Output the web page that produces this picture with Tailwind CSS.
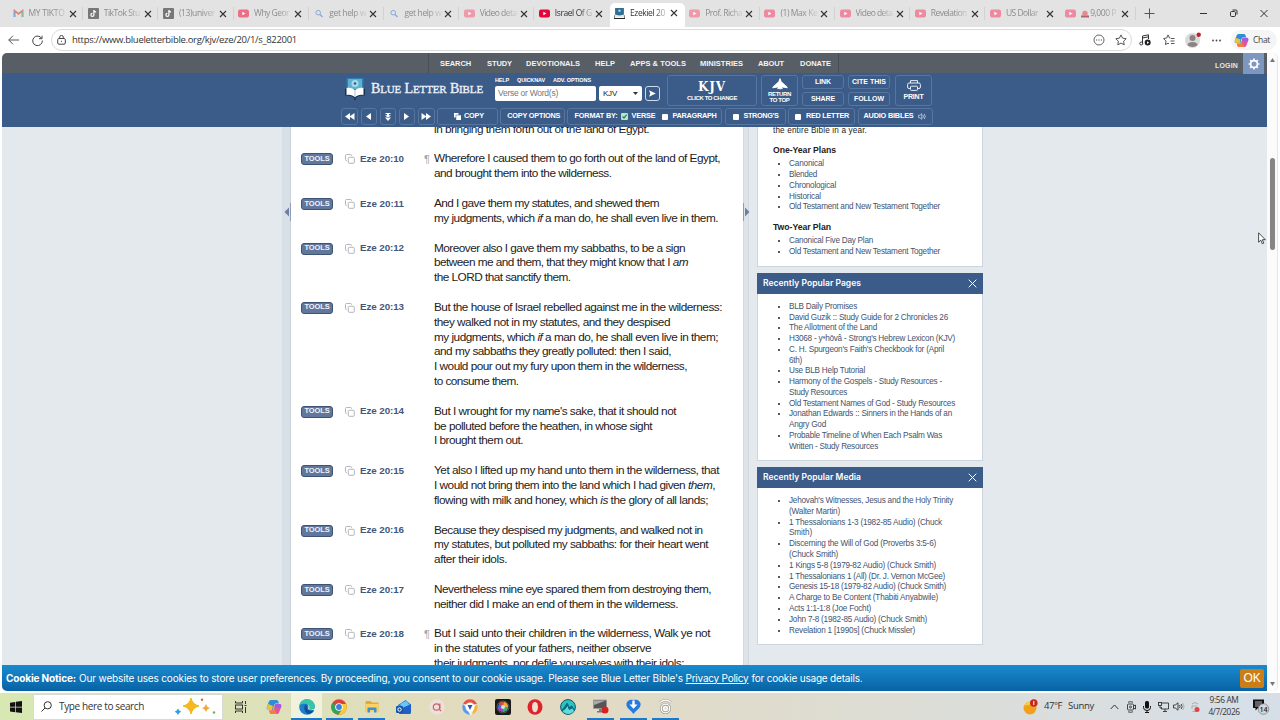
<!DOCTYPE html>
<html lang="en">
<head>
<meta charset="utf-8">
<title>Ezekiel 20 (KJV) - Blue Letter Bible</title>
<script src="https://cdn.jsdelivr.net/npm/@tailwindcss/browser@4"></script>
</head>
<body class="w-[1280px] h-[720px] overflow-hidden bg-white font-['Liberation_Sans',sans-serif]">
<svg class="hidden">
  <symbol id="yt" viewBox="0 0 11 9"><rect y="0.5" width="11" height="8" rx="2" fill="currentColor"/><path d="M4.3 2.7v3.6L7.4 4.5z" fill="#fff"/></symbol>
  <symbol id="x" viewBox="0 0 8 8"><path d="M1 1l6 6M7 1L1 7" stroke="currentColor" stroke-width="1.1" fill="none"/></symbol>
  <symbol id="gm" viewBox="0 0 11 9"><path d="M1.500 8V1.700L5.500 5l4-3.300V8" fill="none" stroke="#e08078" stroke-width="1.700"/><path d="M1.500 8V2.500" stroke="#86a9e0" stroke-width="1.700"/><path d="M9.500 8V2.500" stroke="#86c090" stroke-width="1.700"/></symbol>
  <symbol id="tk" viewBox="0 0 11 11"><rect width="11" height="11" rx="1" fill="#777"/><path d="M5.9 2v4.9a1.5 1.5 0 1 1-1.5-1.5M5.9 2.2c.2 1.300 1 1.900 2.200 2" stroke="#fff" stroke-width="1.2" fill="none"/></symbol>
  <symbol id="mag" viewBox="0 0 11 9"><circle cx="5.200" cy="3.700" r="2.300" stroke="#86a9d8" fill="none"/><path d="M7 5.500L9.500 8" stroke="#86a9d8" stroke-width="1.200"/></symbol>
  <symbol id="blb" viewBox="0 0 10 10"><rect x="1" width="8" height="7" fill="#2f6f94"/><circle cx="5" cy="2.500" r="1.200" fill="#9fd0e0"/><path d="M1 6l4 1 4-1v2.500H1z" fill="#dfe9ee"/><path d="M0 6.500V9.500h10v-3" stroke="#222" fill="none"/></symbol>
  <symbol id="cp" viewBox="0 0 10 10"><rect x="3.300" y="3.300" width="6" height="6" rx="1" stroke="#a9aeb5" fill="none" stroke-width=".9"/><path d="M2 6.500H1.500a1 1 0 0 1-1-1v-4a1 1 0 0 1 1-1h4a1 1 0 0 1 1 1V2" stroke="#a9aeb5" fill="none" stroke-width=".9"/></symbol>
  <symbol id="copilot" viewBox="0 0 16 16">
    <path d="M5.500 1h5c1.200 0 1.600 1 2 2l.4 1.500H10c-1 0-1.500.7-1.800 1.600L6.800 11H2.500C.8 11 .4 9.500.9 8L2.700 3C3.200 1.600 4 1 5.500 1z" fill="#2a8fd8"/>
    <path d="M1 8l1-3 5 2-1 4H2.500C1 11 .6 9.500 1 8z" fill="#e8c23a"/>
    <path d="M10.500 15h-5c-1.200 0-1.600-1-2-2L3.100 11.500H6c1 0 1.500-.7 1.800-1.600L9.200 5h4.300c1.700 0 2.100 1.500 1.600 3l-1.800 5c-.5 1.400-1.300 2-2.800 2z" fill="#e0569a"/>
    <path d="M9.200 5h4.300c1.700 0 2.100 1.500 1.600 3l-.6 1.600-6-1.800z" fill="#a45be0"/><path d="M3.100 11.500H6c1 0 1.500-.7 1.800-1.600l.2-.6 3 5.700H5.500c-1.400 0-2-2-2.400-3.500z" fill="#f08040"/>
  </symbol>
</svg>

<!-- tab strip -->
<div class="flex h-[27px] bg-[#e3e3e3] pl-[8px] font-['Open_Sans',sans-serif] text-[8.500px] text-[#8c8c8c]">
  <div id="tabs" class="flex w-[1127.500px] shrink-0"></div>
  <svg class="mt-[8px] ml-[8px] size-[11px] shrink-0" viewBox="0 0 11 11"><path d="M5.500.5v10M.5 5.500h10" stroke="#555"/></svg>
  <svg class="mt-[9px] ml-[44px] h-[9px] w-[72px] shrink-0" viewBox="0 0 72 9" fill="none" stroke="#333"><path d="M1 4.500h7M61.500 1l7 7M68.500 1l-7 7"/><rect x="31.500" y="2.500" width="5" height="5" rx="1.200"/><path d="M33.500 1H37a1 1 0 0 1 1 1v3.500"/></svg>
</div>

<!-- address bar -->
<div class="flex h-[26px] items-center bg-white">
  <svg class="ml-[8px] h-[10px] w-[11px] shrink-0" viewBox="0 0 11 10" fill="none" stroke="#555"><path d="M11 5H.8M5 .7L.8 5 5 9.300"/></svg>
  <svg class="ml-[13px] size-[11px] shrink-0" viewBox="0 0 11 11" fill="none" stroke="#444"><path d="M9.700 3.500A4.800 4.800 0 1 0 10.300 5.500M10 .7v3H7"/></svg>
  <div class="ml-[8px] flex h-[22px] w-[1081px] shrink-0 items-center rounded-full border border-[#d9dcdc] pr-[4px] pl-[5px]">
    <svg class="h-[10px] w-[9px] shrink-0" viewBox="0 0 9 10" fill="none" stroke="#444"><rect x=".7" y="3.500" width="7.600" height="5.700" rx="1.200"/><path d="M2.700 3.500V2.200a1.800 1.800 0 0 1 3.600 0v1.300"/><path d="M4 6.300h1"/></svg>
    <span class="ml-[6px] whitespace-nowrap font-['Open_Sans',sans-serif] text-[9.500px] text-[#333]" data-w="225">https://www.blueletterbible.org/kjv/eze/20/1/s_822001</span>
    <svg class="ml-auto size-[12px] shrink-0" viewBox="0 0 12 12" fill="none" stroke="#555" stroke-width=".9"><circle cx="6" cy="6" r="5"/><path d="M3 6h1.200M5.400 6h1.200M7.800 6H9" stroke-width="1.200"/></svg>
    <svg class="ml-[10px] size-[12px] shrink-0" viewBox="0 0 12 12" fill="none" stroke="#444" stroke-width=".9"><path d="M6 .9l1.600 3.300 3.600.5-2.600 2.500.6 3.600L6 9.100l-3.200 1.700.6-3.600L.8 4.700l3.600-.5z"/></svg>
  </div>
  <svg class="ml-[7px] size-[12px] shrink-0" viewBox="0 0 12 12"><path d="M3.500 9.500V2l6-1.200V5M3.500 4l6-1.200" fill="none" stroke="#333"/><circle cx="2.300" cy="9.500" r="1.500" fill="none" stroke="#333"/><circle cx="8.700" cy="8.600" r="3" fill="#222"/><path d="M8 7.200v2.800l2.200-1.400z" fill="#fff"/></svg>
  <svg class="ml-[12px] h-[12px] w-[12px] shrink-0" viewBox="0 0 12 12" fill="none" stroke="#444" stroke-width=".9"><path d="M7.500 4.200L6.500 4 5 .9 3.700 4l-3.200.6L3 7.100l-.6 3.500L5 9.200l1 .5M8 4.500h3.500M7.500 7h4M8 9.500h3.500"/></svg>
  <svg class="ml-[10px] h-[16px] w-[17px] shrink-0" viewBox="0 0 17 16"><circle cx="7.500" cy="8.500" r="7.500" fill="#dadada"/><circle cx="7.500" cy="6" r="3" fill="#8a8584"/><path d="M2.500 13c0-4 10-4 10 0-2 2.500-8 2.500-10 0z" fill="#8a8584"/><circle cx="13.700" cy="2.700" r="2.200" fill="#c0202a"/></svg>
  <svg class="ml-[10px] h-[3px] w-[9px] shrink-0" viewBox="0 0 9 3" fill="#444"><circle cx="1" cy="1.500" r=".9"/><circle cx="4.500" cy="1.500" r=".9"/><circle cx="8" cy="1.500" r=".9"/></svg>
  <div class="ml-[10px] flex h-[20px] w-[46px] shrink-0 items-center rounded-full bg-[#f5f5f5] pl-[3px]"><svg class="size-[15px] shrink-0"><use href="#copilot"/></svg><span class="ml-[4px] font-['Open_Sans',sans-serif] text-[8.500px] text-[#444]" data-w="17">Chat</span></div>
</div>

<div class="flex h-[640px] bg-white pl-[2px]">
<!-- page -->
<div class="relative flex h-[638px] w-[1265px] shrink-0 flex-col overflow-hidden rounded-bl-[5px] rounded-tl-[5px] bg-[#e4e9ed]">
  <div class="flex h-[20px] shrink-0 items-center bg-[#575e66] text-[7.500px] font-bold text-[#f3f4f6]">
    <div class="ml-[426px] flex h-full w-[411px] shrink-0 items-center border-x border-[#474e58] pt-px pl-[11px] whitespace-nowrap">
      <span class="w-[47px]"><span data-w="31">SEARCH</span></span><span class="w-[39px]"><span data-w="25">STUDY</span></span><span class="w-[69px]"><span data-w="54">DEVOTIONALS</span></span><span class="w-[35px]"><span data-w="20">HELP</span></span><span class="w-[70px]"><span data-w="56">APPS &amp; TOOLS</span></span><span class="w-[58px]"><span data-w="43">MINISTRIES</span></span><span class="w-[42px]"><span data-w="26">ABOUT</span></span><span data-w="31">DONATE</span>
    </div>
    <span class="mt-[6px] ml-[376px] text-[7px] text-[#e4e7ea]" data-w="23">LOGIN</span>
  </div>
  <div class="absolute top-0 right-[3px] z-10 flex h-[21px] w-[21px] items-center justify-center bg-[#7d97bf]"><svg class="size-[12px]" viewBox="0 0 12 12"><circle cx="6" cy="6" r="3.400" fill="none" stroke="#fff" stroke-width="1.700"/><path d="M6 .6v2M6 9.400v2M.6 6h2M9.400 6h2M2.200 2.200l1.400 1.400M8.400 8.400l1.400 1.400M9.800 2.200L8.400 3.600M3.600 8.400L2.200 9.800" stroke="#fff" stroke-width="1.700"/></svg></div>

  <!-- header -->
  <div class="h-[54px] shrink-0 bg-[#3b5b89] pl-[339px] text-[7px] font-bold whitespace-nowrap text-white">
    <div class="flex h-[35px]">
      <svg class="mt-[4px] ml-[3px] h-[24px] w-[22px] shrink-0" viewBox="0 0 22 24"><rect x="2.500" y="1" width="17" height="16" rx="1" fill="#2e7fae"/><rect x="4" y="2" width="14" height="10" fill="#5db0d2"/><circle cx="11" cy="6.500" r="3.500" fill="#a7d9e6"/><circle cx="11" cy="6.500" r="1.300" fill="#245f88"/><path d="M1 18V12l2-1v6c3-.5 6 0 8 2 2-2 5-2.500 8-2v-6l2 1v6.500c-4 0-7.500.5-10 3-2.500-2.500-6-3-10-3z" fill="#15304f"/><path d="M2.500 11c3.500-.8 6.500.3 8.500 2.500 2-2.200 5-3.300 8.500-2.500v7c-3.500-.6-6.500.2-8.500 2.300-2-2.100-5-2.900-8.500-2.300z" fill="#fff"/><path d="M11 13.500V20" stroke="#9db3c8" stroke-width=".8"/><path d="M9.500 21.500h3L11 23.500z" fill="#15304f"/></svg>
      <div class="mt-[6px] ml-[5px] w-[124px] shrink-0 font-['Liberation_Serif',serif] text-[14px] leading-[19px] font-normal text-[#f0f4f9]"><span class="[-webkit-text-stroke:0.300px_#f0f4f9]" data-w="112">B<span class="text-[11px]">LUE</span> L<span class="text-[11px]">ETTER</span> B<span class="text-[11px]">IBLE</span></span></div>
      <div class="w-[167px] shrink-0 pt-[3px]">
        <div class="flex h-[8px] items-center text-[5.500px]"><span class="w-[22px]"><span data-w="14">HELP</span></span><span class="w-[36px]"><span data-w="28">QUICKNAV</span></span><span data-w="38">ADV. OPTIONS</span></div>
        <div class="mt-[2px] flex h-[15px] gap-[3px] font-normal">
          <div class="flex w-[101px] shrink-0 items-center rounded-[2px] bg-white pl-[3px] text-[8.500px] text-[#777]"><span data-w="60">Verse or Word(s)</span></div>
          <div class="flex w-[43px] shrink-0 items-center rounded-[2px] bg-white pl-[4px] text-[8px] text-[#222]"><span data-w="14">KJV</span><svg class="ml-[16px] h-[3px] w-[5px]" viewBox="0 0 5 3"><path d="M0 0h5L2.500 3z" fill="#333"/></svg></div>
          <div class="flex w-[15px] shrink-0 items-center justify-center rounded-[3px] border border-[#cfdaea]"><svg class="h-[7px] w-[7px]" viewBox="0 0 7 7"><path d="M0 .3l6.800 3.200L0 6.700l1.300-3.200z" fill="#fff"/></svg></div>
        </div>
      </div>
      <div class="mt-[2px] ml-[5px] flex h-[31px] gap-[4px]">
        <div class="flex w-[90px] shrink-0 flex-col items-center rounded-[3px] border border-[#56759f]"><span class="mt-[4px] font-['DejaVu_Serif',serif] text-[12px] leading-[14px]" data-w="28">KJV</span><span class="mt-px text-[6px] leading-[7px]" data-w="50">CLICK TO CHANGE</span></div>
        <div class="flex w-[37px] shrink-0 flex-col items-center rounded-[3px] border border-[#56759f] text-[6px] leading-[6px]"><svg class="mt-[2px] h-[12px] w-[16px] shrink-0" viewBox="0 0 16 12"><path d="M8 0c.8.800 1.200 2 1.300 3.200L15.500 9v1.200L10 9.600l1 1.600-2.400-.4L8 12l-.6-1.200-2.400.4 1-1.600-5.500.6V9l6.200-5.800C6.800 2 7.200.8 8 0z" fill="#fff"/></svg><span class="mt-px" data-w="23">RETURN</span><span data-w="20">TO TOP</span></div>
        <div class="grid grid-cols-[42px_42px] grid-rows-[14px_14px] gap-x-[4px] gap-y-[3px] text-[7px]">
          <div class="flex items-center justify-center rounded-[3px] border border-[#56759f]"><span data-w="16">LINK</span></div><div class="flex items-center justify-center rounded-[3px] border border-[#56759f]"><span data-w="34">CITE THIS</span></div>
          <div class="flex items-center justify-center rounded-[3px] border border-[#56759f]"><span data-w="24">SHARE</span></div><div class="flex items-center justify-center rounded-[3px] border border-[#56759f]"><span data-w="30">FOLLOW</span></div>
        </div>
        <div class="ml-px flex w-[37px] shrink-0 flex-col items-center rounded-[3px] border border-[#56759f]"><svg class="mt-[4px] h-[11px] w-[14px] shrink-0" viewBox="0 0 14 11" fill="none" stroke="#e6edf6"><path d="M3.500 3V.6h7V3M3.500 8.500H2A1.400 1.400 0 0 1 .6 7V4.500A1.500 1.500 0 0 1 2 3h10a1.500 1.500 0 0 1 1.400 1.500V7A1.400 1.400 0 0 1 12 8.500h-1.500"/><rect x="3.500" y="6.200" width="7" height="4.200" rx=".8"/></svg><span class="mt-[2px] text-[7px] leading-[8px]" data-w="20">PRINT</span></div>
      </div>
    </div>
    <div class="flex h-[17px] gap-[2.500px] text-[7.300px]">
      <div class="flex w-[17px] shrink-0 items-center justify-center rounded-[3px] border border-[#56759f]"><svg class="h-[7px] w-[10px]" viewBox="0 0 10 7"><path d="M5 0v7L0 3.500zM9.500 0v7l-5-3.500z" fill="#fff"/></svg></div>
      <div class="flex w-[16.500px] shrink-0 items-center justify-center rounded-[3px] border border-[#56759f]"><svg class="h-[7px] w-[5px]" viewBox="0 0 5 7"><path d="M5 0v7L0 3.500z" fill="#fff"/></svg></div>
      <div class="flex w-[16.500px] shrink-0 items-center justify-center rounded-[3px] border border-[#56759f]"><svg class="h-[8px] w-[6px]" viewBox="0 0 6 8"><path d="M.5 0h5v1H4v1.200h2L3 4.800 0 2.200h2V1H.5zM0 4.500h2l1 1 1-1h2L3 8z" fill="#fff"/></svg></div>
      <div class="flex w-[16.500px] shrink-0 items-center justify-center rounded-[3px] border border-[#56759f]"><svg class="h-[7px] w-[5px]" viewBox="0 0 5 7"><path d="M0 0v7l5-3.500z" fill="#fff"/></svg></div>
      <div class="flex w-[17px] shrink-0 items-center justify-center rounded-[3px] border border-[#56759f]"><svg class="h-[7px] w-[10px]" viewBox="0 0 10 7"><path d="M.5 0v7l5-3.500zM5 0v7l5-3.500z" fill="#fff"/></svg></div>
      <div class="flex w-[60.500px] shrink-0 items-center rounded-[3px] border border-[#56759f] pl-[16px]"><svg class="mr-[3px] size-[7px]" viewBox="0 0 7 7"><path d="M0 0h4.500v1.700H1.700v2.800H0z" fill="#fff"/><path d="M2.200 2.200H7V7H2.200z" fill="#fff"/></svg><span data-w="20">COPY</span></div>
      <div class="flex w-[64.500px] shrink-0 items-center justify-center rounded-[3px] border border-[#56759f] pl-[3px]"><span data-w="53">COPY OPTIONS</span></div>
      <div class="flex w-[155px] shrink-0 items-center rounded-[3px] border border-[#56759f] pl-[6.500px]"><span data-w="43">FORMAT BY:</span><svg class="ml-[3px] size-[7px] shrink-0" viewBox="0 0 7 7"><rect width="7" height="7" rx="1.200" fill="#bde6c6"/><path d="M1.500 3.500L3 5l2.700-3.300" stroke="#1f8f45" stroke-width="1.300" fill="none"/></svg><span class="ml-[4px]" data-w="24">VERSE</span><i class="ml-[6px] size-[6px] shrink-0 rounded-[1px] bg-white"></i><span class="ml-[5px]" data-w="44">PARAGRAPH</span></div>
      <div class="flex w-[61px] shrink-0 items-center rounded-[3px] border border-[#56759f] pl-[7px]"><i class="size-[6px] shrink-0 rounded-[1px] bg-white"></i><span class="ml-[5px]" data-w="35">STRONG'S</span></div>
      <div class="flex w-[67px] shrink-0 items-center rounded-[3px] border border-[#56759f] pl-[6px]"><i class="size-[6px] shrink-0 rounded-[1px] bg-white"></i><span class="ml-[5px]" data-w="43">RED LETTER</span></div>
      <div class="flex w-[75px] shrink-0 items-center rounded-[3px] border border-[#56759f] pl-[5px]"><span data-w="50">AUDIO BIBLES</span><svg class="ml-[4px] h-[7px] w-[8px]" viewBox="0 0 8 7" fill="none" stroke="#c5d2e4" stroke-width=".8"><path d="M.4 2.300H2L3.800.6v5.800L2 4.700H.4zM5 2q1 1.500 0 3M6.300 1q2 2.500 0 5"/></svg></div>
    </div>
  </div>

  <!-- body -->
  <div class="flex h-[538px] shrink-0 overflow-hidden">
    <div class="w-[280px] shrink-0"></div>
    <div class="relative w-[9px] shrink-0 border-r border-[#ccd5de] bg-[#d8dfe6]"><svg class="absolute top-[76px] right-[-1px] h-[18px] w-[7px]" viewBox="0 0 7 18"><path d="M6.500 0v18" stroke="#8c9db8"/><path d="M5 4.500v9L.5 9z" fill="#6d80a0"/></svg></div>
    <div class="w-[452px] shrink-0 bg-white">
      <div id="verses" class="-mt-[5.400px] flex flex-col gap-[14.850px] pl-[10px] text-[11.800px] leading-[14.850px] whitespace-nowrap text-[#1c1c1c]"></div>
    </div>
    <div class="relative w-[6px] shrink-0 border-x border-[#d0d8e0] bg-[#dde3e9]"><svg class="absolute top-[76px] left-[-1px] h-[18px] w-[7px]" viewBox="0 0 7 18"><path d="M.5 0v18" stroke="#8c9db8"/><path d="M2 4.500v9L6.500 9z" fill="#6d80a0"/></svg></div>
    <div class="ml-[8px] flex w-[225.500px] shrink-0 flex-col gap-[6px] text-[8.200px] leading-[10.730px] whitespace-nowrap text-[#44546f]">
      <div class="h-[140px] shrink-0 border-x border-b border-[#ccd5dd] bg-white pl-[15px]">
        <div class="-mt-[1.500px] text-[#222]"><span data-w="94">the entire Bible in a year.</span></div>
        <div class="mt-[9px] text-[8.700px] font-bold text-[#222]"><span data-w="63">One-Year Plans</span></div>
        <ul class="mt-[3.500px] list-disc pl-[16px] marker:text-[7px] marker:text-[#222]"><li><span data-w="35">Canonical</span></li><li><span data-w="28">Blended</span></li><li><span data-w="47">Chronological</span></li><li><span data-w="32">Historical</span></li><li><span data-w="151">Old Testament and New Testament Together</span></li></ul>
        <div class="mt-[9px] text-[8.700px] font-bold text-[#222]"><span data-w="58">Two-Year Plan</span></div>
        <ul class="mt-[3.500px] list-disc pl-[16px] marker:text-[7px] marker:text-[#222]"><li><span data-w="84">Canonical Five Day Plan</span></li><li><span data-w="151">Old Testament and New Testament Together</span></li></ul>
      </div>
      <div class="h-[188px] shrink-0 border border-t-0 border-[#ccd5dd] bg-white">
        <div class="-mx-px flex h-[21px] items-center justify-between bg-[#3b5b89] pr-[6px] pl-[6px] font-['Inter',sans-serif] text-[8.500px] font-semibold text-white"><span data-w="98">Recently Popular Pages</span><svg class="size-[9px] shrink-0" viewBox="0 0 9 9"><path d="M.7.7l7.600 7.600M8.300.7L.7 8.300" stroke="#fff"/></svg></div>
        <ul class="mt-[8px] list-disc pl-[31px] marker:text-[7px] marker:text-[#222]"><li><span data-w="68">BLB Daily Promises</span></li><li><span data-w="159">David Guzik :: Study Guide for 2 Chronicles 26</span></li><li><span data-w="88">The Allotment of the Land</span></li><li><span data-w="166">H3068 - yᵊhōvâ - Strong's Hebrew Lexicon (KJV)</span></li><li><span data-w="155">C. H. Spurgeon's Faith's Checkbook for (April</span><br><span data-w="13">6th)</span></li><li><span data-w="76">Use BLB Help Tutorial</span></li><li><span data-w="153">Harmony of the Gospels - Study Resources -</span><br><span data-w="58">Study Resources</span></li><li><span data-w="166">Old Testament Names of God - Study Resources</span></li><li><span data-w="163">Jonathan Edwards :: Sinners in the Hands of an</span><br><span data-w="37">Angry God</span></li><li><span data-w="153">Probable Timeline of When Each Psalm Was</span><br><span data-w="89">Written - Study Resources</span></li></ul>
      </div>
      <div class="h-[178px] shrink-0 border border-t-0 border-[#ccd5dd] bg-white">
        <div class="-mx-px flex h-[21px] items-center justify-between bg-[#3b5b89] pr-[6px] pl-[6px] font-['Inter',sans-serif] text-[8.500px] font-semibold text-white"><span data-w="98">Recently Popular Media</span><svg class="size-[9px] shrink-0" viewBox="0 0 9 9"><path d="M.7.7l7.600 7.600M8.300.7L.7 8.300" stroke="#fff"/></svg></div>
        <ul class="mt-[8px] list-disc pl-[31px] leading-[10.800px] marker:text-[7px] marker:text-[#222]"><li><span data-w="164">Jehovah's Witnesses, Jesus and the Holy Trinity</span><br><span data-w="51">(Walter Martin)</span></li><li><span data-w="153">1 Thessalonians 1-3 (1982-85 Audio) (Chuck</span><br><span data-w="23">Smith)</span></li><li><span data-w="147">Discerning the Will of God (Proverbs 3:5-6)</span><br><span data-w="49">(Chuck Smith)</span></li><li><span data-w="147">1 Kings 5-8 (1979-82 Audio) (Chuck Smith)</span></li><li><span data-w="156">1 Thessalonians 1 (All) (Dr. J. Vernon McGee)</span></li><li><span data-w="157">Genesis 15-18 (1979-82 Audio) (Chuck Smith)</span></li><li><span data-w="149">A Charge to Be Content (Thabiti Anyabwile)</span></li><li><span data-w="82">Acts 1:1-1:8 (Joe Focht)</span></li><li><span data-w="138">John 7-8 (1982-85 Audio) (Chuck Smith)</span></li><li><span data-w="126">Revelation 1 [1990s] (Chuck Missler)</span></li></ul>
      </div>
    </div>
  </div>

  <!-- cookie notice -->
  <div class="flex h-[26px] shrink-0 items-center bg-linear-to-b from-[#198bd0] to-[#0863a4] pr-[3px] pl-[4px] font-['Inter',sans-serif] text-[10px] whitespace-nowrap text-white">
    <span class="w-[73px] shrink-0 font-bold"><span data-w="70">Cookie Notice:</span></span><span class="w-[606.500px] shrink-0"><span data-w="604">Our website uses cookies to store user preferences. By proceeding, you consent to our cookie usage. Please see Blue Letter Bible's</span></span><span class="underline" data-w="63">Privacy Policy</span><span class="ml-[3px]" data-w="111">for cookie usage details.</span>
    <span class="ml-auto flex h-[19px] w-[24px] items-center justify-center rounded-[2px] bg-[#cb7d16] font-['Liberation_Sans',sans-serif] text-[12px]"><span data-w="17">OK</span></span>
  </div>
</div>
<!-- scrollbar -->
<div class="flex h-[638px] w-[11px] flex-col items-center rounded-r-[5px] border-r border-[#e6e6e6] bg-[#fbfbfb]">
  <svg class="mt-[5px] h-[4px] w-[5px] shrink-0" viewBox="0 0 5 4"><path d="M0 4h5L2.500 0z" fill="#777"/></svg>
  <div class="mt-[96px] h-[92px] w-[5px] shrink-0 rounded-full bg-[#858585]"></div>
  <svg class="mt-auto mb-[5px] h-[4px] w-[5px] shrink-0" viewBox="0 0 5 4"><path d="M0 0h5L2.500 4z" fill="#777"/></svg>
</div>
</div>

<!-- taskbar -->
<div class="relative flex h-[27px] items-center bg-linear-to-r from-[#d7e8b2] from-0% via-[#e3dac0] via-40% to-[#d6dfe9] to-100% font-['Open_Sans',sans-serif] text-[#333]">
  <svg class="ml-[10px] size-[12px] shrink-0" viewBox="0 0 12 12" fill="#111"><path d="M0 1.700l5.300-.8v4.800H0zM6 .8L12 0v5.700H6zM0 6.400h5.300v4.800L0 10.400zM6 6.400h6V12l-6-.8z"/></svg>
  <div class="ml-[11px] flex h-[26px] w-[190px] shrink-0 items-center border border-[#d8dcd0] bg-white pr-[5px]">
    <svg class="ml-[7px] size-[11px] shrink-0" viewBox="0 0 11 11" fill="none" stroke="#333"><circle cx="6.700" cy="4.300" r="3.600"/><path d="M4 7L.5 10.500"/></svg>
    <span class="ml-[7px] whitespace-nowrap text-[10px]" data-w="85">Type here to search</span>
    <svg class="ml-auto h-[17px] w-[42px] shrink-0" viewBox="0 0 42 17"><path d="M16 0q1.500 6.500 8 8-6.500 1.500-8 8-1.500-6.500-8-8 6.500-1.500 8-8z" fill="#f5b81f" stroke="#f5b81f"/><path d="M31 6q.8 3.200 4 4-3.200.8-4 4-.8-3.200-4-4 3.200-.8 4-4z" fill="#f0a83a"/><path d="M3 11q.5 2.200 2.800 2.700Q3.500 14.200 3 16.500 2.500 14.200.2 13.700 2.500 13.200 3 11z" fill="#2f9be0" stroke="#2f9be0" stroke-width=".7"/><circle cx="27" cy="1.700" r="1.200" fill="#d9603a"/><circle cx="39" cy="14.500" r="1.200" fill="#6fb04a"/></svg>
  </div>
  <div class="ml-[1px] flex h-full shrink-0 text-center">
    <div class="flex w-[33px] items-center justify-center"><svg class="size-[12px]" viewBox="0 0 12 12" fill="none" stroke="#333"><path d="M.5 0v2h7V0M.5 12v-2h7v2M10.500 0v3M10.500 6v6"/><rect x=".5" y="4" width="7" height="4"/><path d="M9.500 4.500h2"/></svg></div>
    <div class="flex w-[34px] items-center justify-center"><svg class="size-[16px]"><use href="#copilot"/></svg></div>
    <div class="flex w-[31px] items-center justify-center border-b-2 border-[#1e78c8] bg-[#f1f2de]"><svg class="mt-[2px] size-[16px]" viewBox="0 0 16 16"><circle cx="8" cy="8" r="7.800" fill="#1d7fc9"/><path d="M.3 7C1 2.500 4.500.2 8 .2c4.500 0 7.800 3.300 7.800 6.600 0 2.500-2 4-4.300 4-1.500 0-2.500-.6-2.300-1.500.8-1 .8-3.800-2-4.300C4.500 4.600 1.500 5 .3 7z" fill="#38c5a6"/><path d="M7 5c-2.500 2-2.500 7.500 2 10 2.500 0 4.800-1.300 6-3.500-3.500 1.300-6.500.2-6.600-2.200z" fill="#0e4f9e"/><path d="M8.600 5.600c1.200.9 1.400 2.700.6 3.700-.3 1.100 2.500 2.300 5.800 1.500l1.500 1.200-.5-2.500-3.500 1.300c-2 0-2.800-.8-2.300-1.800.5-1.200 0-2.900-1.600-3.400z" fill="#f1f2de"/></svg></div>
    <div class="flex w-[34px] items-center justify-center"><div class="flex h-full w-[27px] items-center justify-center border-b-2 border-[#1e78c8]"><svg class="mt-[2px] size-[16px]" viewBox="0 0 16 16"><circle cx="8" cy="8" r="7.800" fill="#dd4435"/><path d="M1.200 4.200A7.800 7.800 0 0 0 7.500 15.800L11 10 8 8z" fill="#33a457"/><path d="M15.200 5H8l3.200 5-3.700 5.800A7.800 7.800 0 0 0 15.200 5z" fill="#f8cd2e"/><circle cx="8" cy="8" r="3.800" fill="#fff"/><circle cx="8" cy="8" r="2.900" fill="#3f7de0"/></svg></div></div>
    <div class="flex w-[31px] items-center justify-center"><div class="flex h-full w-[27px] items-center justify-center border-b-2 border-[#1e78c8]"><svg class="mt-[2px] h-[13px] w-[14px]" viewBox="0 0 14 13"><path d="M.5 1h5L7 2.500h6.500V12H.5z" fill="#e9a92f"/><path d="M.5 4h13v8H.5z" fill="#f9d364"/><path d="M2.500 12.500V7.500h9v5H9V10H5v2.500z" fill="#3f92cf"/></svg></div></div>
    <div class="flex w-[34px] items-center justify-center"><svg class="h-[14px] w-[16px]" viewBox="0 0 16 14"><path d="M2 5L9.500 0 15 4.500v7.500a2 2 0 0 1-2 2H3z" fill="#2b7de0"/><path d="M4 4l6-3 4 4-7 4z" fill="#6cc6f5"/><path d="M4 9l11-5v8a2 2 0 0 1-2 2H4z" fill="#1f5fc8"/><rect y="6" width="7" height="7" rx="1.200" fill="#1355b0"/><circle cx="3.500" cy="9.500" r="1.700" stroke="#fff" fill="none"/></svg></div>
    <div class="flex w-[32px] items-center justify-center"><svg class="size-[16px]" viewBox="0 0 16 16"><circle cx="8" cy="8" r="7.800" fill="#eee0d8"/><circle cx="7.500" cy="8" r="3.200" fill="none" stroke="#c8606c" stroke-width="1.200"/><path d="M10.800 4.500v6q.2 1.300 1.500 1" fill="none" stroke="#c8606c" stroke-width="1.200"/></svg></div>
    <div class="flex w-[33px] items-center justify-center"><svg class="size-[16px]" viewBox="0 0 16 16"><circle cx="8" cy="8" r="7.800" fill="#f4f1ea"/><path d="M1 5A7.500 7.500 0 0 1 15 5L8 6z" fill="#e35446"/><path d="M15 5a7.500 7.500 0 0 1-5 10.500L12 8z" fill="#f3b53e"/><path d="M1 5a7.500 7.500 0 0 0 7 10.700L4 8z" fill="#5b9be8"/><circle cx="8" cy="8" r="4.500" fill="#fff"/><path d="M5.500 6h5L8 11z" fill="#315aa8"/></svg></div>
    <div class="flex w-[33px] items-center justify-center"><svg class="size-[16px]" viewBox="0 0 16 16"><rect width="16" height="16" rx="2" fill="#181818"/><circle cx="8" cy="8" r="5" fill="#3a74d0"/><path d="M8 8L4 4.500A5 5 0 0 1 9 3z" fill="#e4493e"/><path d="M8 8l1-5a5 5 0 0 1 4 5z" fill="#f0ab30"/><path d="M8 8H3a5 5 0 0 0 4 5z" fill="#b03cb8"/><path d="M8 8h5a5 5 0 0 1-5 5z" fill="#3bb070"/><circle cx="8" cy="8" r="2" fill="#ddd"/><circle cx="8" cy="8" r="6" fill="none" stroke="#888" stroke-width=".6"/></svg></div>
    <div class="flex w-[32px] items-center justify-center"><svg class="size-[16px]" viewBox="0 0 16 16"><ellipse cx="8" cy="8" rx="7.500" ry="7.800" fill="#e0222c"/><ellipse cx="8" cy="8" rx="3" ry="5.300" fill="#ece2cf"/></svg></div>
    <div class="flex w-[33px] items-center justify-center"><svg class="size-[16px]" viewBox="0 0 16 16"><circle cx="8" cy="8" r="7.400" fill="#2ac3c6" stroke="#0f5560" stroke-width="1"/><path d="M1.500 11C4 9 5 6 7 3.500c1.500 1 1.500 3 2.500 4.500 1-.5 1.500-1.500 2.500-1.500 1 1.500 2 3 3 4A7.300 7.300 0 0 1 1.500 11z" fill="#0b6a80"/><path d="M2.500 12c2.500-1 3.500-3 5-5 .5 2 1 3 2 4 1-.5 2-1.500 3-1.500l1.500 2.500a7 7 0 0 1-11.500 0z" fill="#5fdcd8"/></svg></div>
    <div class="flex w-[33px] items-center justify-center"><div class="flex h-full w-[27px] items-center justify-center border-b-2 border-[#1e78c8]"><svg class="mt-[2px] h-[15px] w-[16px]" viewBox="0 0 16 15"><rect x=".5" y="1" width="13" height="8.500" fill="#555" stroke="#999" stroke-width=".7"/><path d="M1 1.500h12L1 6z" fill="#aaa"/><path d="M4 12h6v1.500H4zM6 10h2.500v2H6z" fill="#777"/><circle cx="12" cy="11" r="3.500" fill="#d92020"/></svg></div></div>
    <div class="flex w-[32px] items-center justify-center"><div class="flex h-full w-[27px] items-center justify-center border-b-2 border-[#1e78c8]"><svg class="mt-[2px] size-[15px]" viewBox="0 0 15 15"><path d="M7.500 1C11 0 15 2 14.600 6 14 10 10 11 7.500 15 5 11 1 10 .4 6 0 2 4 0 7.500 1z" fill="#267be0"/><path d="M6.300 1.500h2.400v4h2.800L7.500 9.700 3.500 5.500h2.800z" fill="#fff"/></svg></div></div>
    <div class="flex w-[33px] items-center justify-center"><div class="flex h-full w-[27px] items-center justify-center border-b-2 border-[#1e78c8]"><svg class="mt-[2px] size-[15px]" viewBox="0 0 15 15" fill="none"><g stroke="#8e8e88" stroke-width="2.400"><circle cx="7.500" cy="9.500" r="4.300"/><path d="M2 3.500q5.500-4.500 11 0"/></g><g stroke="#fff" stroke-width="1.300"><circle cx="7.500" cy="9.500" r="4.300"/><path d="M2 3.500q5.500-4.500 11 0"/><circle cx="7.500" cy="9.500" r="1.800"/></g></svg></div></div>
  </div>
  <svg class="ml-[341px] h-[16px] w-[15px] shrink-0" viewBox="0 0 15 16"><circle cx="7" cy="9" r="6.500" fill="#f2a01c"/><path d="M1 6.500a6.500 6.500 0 0 1 6-4l3 3z" fill="#f8cf43"/><circle cx="10.800" cy="4" r="3.800" fill="#c5281f"/><path d="M10.800 2v4" stroke="#fff"/></svg>
  <span class="ml-[6px] w-[24px] shrink-0 text-[9.500px]"><span data-w="18">47°F</span></span><span class="w-[42px] shrink-0 text-[9.500px]"><span data-w="26">Sunny</span></span>
  <svg class="h-[6px] w-[9px] shrink-0" viewBox="0 0 9 6" fill="none" stroke="#333"><path d="M.7 5l3.800-4 3.800 4"/></svg>
  <svg class="ml-[8px] h-[12px] w-[9px] shrink-0" viewBox="0 0 9 12" fill="none" stroke="#333" stroke-width=".9"><rect x=".5" y="3" width="6" height="6" rx="1"/><path d="M6.500 5l2-1v4l-2-1M1 1.200q2.500-1 5 0M1 10.800q2.500 1 5 0"/><circle cx="3.500" cy="6" r="1"/></svg>
  <svg class="ml-[7px] h-[12px] w-[8px] shrink-0" viewBox="0 0 8 12"><rect x="2" width="4" height="7.500" rx="1.500" fill="#111"/><path d="M.5 5v1.500a3.500 3 0 0 0 7 0V5M4 9.500V12M2 11.500h4" stroke="#111" fill="none"/></svg>
  <svg class="ml-[7px] h-[10px] w-[11px] shrink-0" viewBox="0 0 11 10" fill="none" stroke="#333" stroke-width=".9"><path d="M4 1h6.500v6H3.500V5M5 9.500h4M7 7v2.500"/><rect x=".5" y=".5" width="3" height="3"/><path d="M2 3.500V6h1.500"/></svg>
  <svg class="ml-[4px] h-[9px] w-[12px] shrink-0" viewBox="0 0 12 9" fill="none" stroke="#333" stroke-width=".9"><path d="M.5 3h1.800L5 .8v7.400L2.300 6H.5zM6.500 3q1 1.500 0 3M8.200 2q1.800 2.500 0 5"/><path d="M9.800 1q2.500 3.500 0 7" stroke="#aaa"/></svg>
  <svg class="ml-[6px] h-[12px] w-[9px] shrink-0" viewBox="0 0 9 12" fill="none" stroke="#aaa"><path d="M1 3q3-3 6 0M1 8V5h5M1.500 10.500h3"/><circle cx="6" cy="8.500" r="2.500" fill="#e24444" stroke="none"/></svg>
  <div class="-mt-px ml-[8px] flex w-[32px] shrink-0 flex-col items-center text-[8.300px] leading-[12px] whitespace-nowrap"><span data-w="29">9:56 AM</span><span data-w="31">4/7/2026</span></div>
  <svg class="ml-[12px] h-[17px] w-[18px] shrink-0" viewBox="0 0 18 17"><path d="M1 1.500h11v8.500H6l-2.500 2.500V10H1z" fill="#111"/><path d="M3 4h7M3 6h7M3 8h4" stroke="#d6dfe9" stroke-width=".8"/><circle cx="11.500" cy="11" r="5.300" fill="#d3d6d8" stroke="#777" stroke-width=".7"/><text x="11.500" y="13.500" text-anchor="middle" font-size="7" font-weight="600" fill="#222" font-family="Open Sans">14</text></svg>
</div>

<!-- pointer -->
<svg class="absolute top-[232px] left-[1258px] z-20 h-[13px] w-[8px]" viewBox="0 0 8 13"><path d="M.6.8v9.400l2.200-2 1.500 3.600 1.500-.7-1.500-3.400h3z" fill="#fff" stroke="#222" stroke-width=".8"/></svg>

<script>
// Each tab: icon, icon colour class, title, title width, whether a divider follows.
const tabs = [
  ['gm', '', 'MY TIKTO', 36, 1], ['tk', '', 'TikTok Stu', 36, 1], ['tk', '', '(13)univer', 36, 1],
  ['yt', 'text-[#ec6f88]', 'Why Geor', 35, 1], ['mag', '', 'get help w', 37, 1], ['mag', '', 'get help w', 37, 1],
  ['yt', 'text-[#ee9aaa]', 'Video deta', 37, 1], ['yt', 'text-[#e4063a]', 'Israel Of G', 37, 0], ['blb', '', 'Ezekiel 20', 35, 0],
  ['yt', 'text-[#ee9aaa]', 'Prof. Richa', 37, 1], ['yt', 'text-[#ee8aa0]', '(1) Max Ke', 37, 1], ['yt', 'text-[#ee8aa0]', 'Video deta', 37, 1],
  ['yt', 'text-[#ee8aa0]', 'Revelation', 36, 1], ['yt', 'text-[#ee8aa0]', 'US Dollar', 32, 0], ['yt', 'text-[#ee8aa0]', '9,000 P', 26, 1],
];
const siren = '<svg class="mr-px size-[8px] shrink-0" viewBox="0 0 8 8"><path d="M1.300 5.500V3.500a2.700 2.700 0 0 1 5.400 0v2z" fill="#e58a92"/><path d="M0 5.500h8v2H0z" fill="#a8686c"/></svg>';
document.getElementById('tabs').innerHTML = tabs.map(([icon, tint, title, w, bar], i) => `
  <div class="${i === 8 ? 'mt-[3px] flex h-[24px] rounded-t-[5px] bg-white pb-[4px] text-[#333]' : 'my-[7px] flex h-[13px]'} ${i === 7 ? 'text-[#333]' : ''} ${bar ? 'border-r border-[#d2d2d2]' : ''} w-[75.200px] shrink-0 items-center pl-[4.500px]">
    <svg class="${icon === 'tk' || icon === 'blb' ? 'h-[11px]' : 'h-[9px]'} w-[11px] shrink-0 ${tint}"><use href="#${icon}"/></svg>
    <span class="ml-[5px] flex w-[40px] shrink-0 items-center whitespace-nowrap mask-r-from-60%">${i === 14 ? siren : ''}<span data-w="${w}">${title}</span></span>
    <svg class="size-[8px] shrink-0 text-[#333]"><use href="#x"/></svg>
  </div>`).join('');

const verses = [
  ['', 0, [['in bringing them forth out of the land of Egypt.', 215]]],
  ['Eze 20:10', 1, [['Wherefore I caused them to go forth out of the land of Egypt,', 286], ['and brought them into the wilderness.', 177.5]]],
  ['Eze 20:11', 0, [['And I gave them my statutes, and shewed them', 225], ['my judgments, which <i>if</i> a man do, he shall even live in them.', 284]]],
  ['Eze 20:12', 0, [['Moreover also I gave them my sabbaths, to be a sign', 251], ['between me and them, that they might know that I <i>am</i>', 254], ['the LORD that sanctify them.', 136.5]]],
  ['Eze 20:13', 0, [['But the house of Israel rebelled against me in the wilderness:', 288], ['they walked not in my statutes, and they despised', 236], ['my judgments, which <i>if</i> a man do, he shall even live in them;', 284], ['and my sabbaths they greatly polluted: then I said,', 237], ['I would pour out my fury upon them in the wilderness,', 253], ['to consume them.', 84.5]]],
  ['Eze 20:14', 0, [["But I wrought for my name's sake, that it should not", 242], ['be polluted before the heathen, in whose sight', 218], ['I brought them out.', 89]]],
  ['Eze 20:15', 0, [['Yet also I lifted up my hand unto them in the wilderness, that', 285], ['I would not bring them into the land which I had given <i>them</i>,', 281], ['flowing with milk and honey, which <i>is</i> the glory of all lands;', 274]]],
  ['Eze 20:16', 0, [['Because they despised my judgments, and walked not in', 268.500], ['my statutes, but polluted my sabbaths: for their heart went', 274], ['after their idols.', 73]]],
  ['Eze 20:17', 0, [['Nevertheless mine eye spared them from destroying them,', 277], ['neither did I make an end of them in the wilderness.', 244]]],
  ['Eze 20:18', 1, [['But I said unto their children in the wilderness, Walk ye not', 276], ['in the statutes of your fathers, neither observe', 217], ['their judgments, nor defile yourselves with their idols:', 250]]],
];
document.getElementById('verses').innerHTML = verses.map(([ref, para, lines]) => `
  <div class="flex items-start">
    <div class="flex h-[15px] w-[133px] shrink-0 items-center pt-[1px] text-[9.800px] font-bold text-[#44587c]">
      ${ref ? `<span class="flex h-[12px] w-[32px] shrink-0 items-center justify-center rounded-[3px] border border-[#3f5375] bg-[#62779c] text-[7.500px] text-[#eef2f8]"><span data-w="25">TOOLS</span></span>
      <svg class="ml-[12px] mr-[5px] size-[10px] shrink-0"><use href="#cp"/></svg><span data-w="44">${ref}</span>
      <span class="ml-auto pr-[4px] text-[11px] font-normal text-[#a5a5a5]">${para ? '¶' : ''}</span>` : ''}
    </div>
    <div>${lines.map(([t, w]) => `<div><span data-w="${w}">${t}</span></div>`).join('')}</div>
  </div>`).join('');

// Track each label out to its set width once the styles apply.
function track() {
  const labels = [...document.querySelectorAll('[data-w]')];
  labels.forEach(el => { el.style.letterSpacing = '0px'; el.style.whiteSpace = 'nowrap'; el.style.flexShrink = 0; });
  const widths = labels.map(el => el.getBoundingClientRect().width);
  labels.forEach((el, i) => { el.style.letterSpacing = ((el.dataset.w - widths[i]) / el.textContent.length) + 'px'; });
}
addEventListener('load', () => {
  track();
  document.fonts.ready.then(track);
  requestAnimationFrame(track);
  setTimeout(track, 100);
});
new MutationObserver(track).observe(document.head, { childList: true, subtree: true });
</script>
</body>
</html>
